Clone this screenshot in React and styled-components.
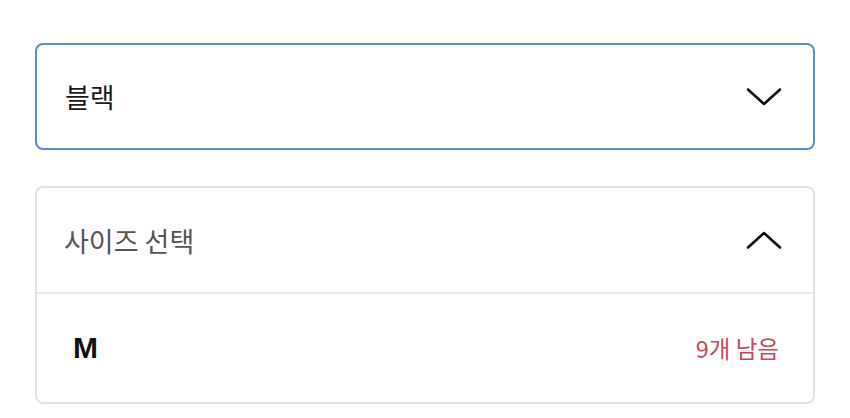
import React from "react";
import styled, { createGlobalStyle } from "styled-components";

const Global = createGlobalStyle`
  html, body { margin: 0; padding: 0; background: #fff; }
  body { font-family: "Noto Sans CJK KR", "Noto Sans", sans-serif; }
`;

const Page = styled.div`
  display: flex;
  flex-direction: column;
  gap: 36px;
  padding: 43px 35px 0;
`;

const Select = styled.div`
  box-sizing: border-box;
  height: 107px;
  border: 2px solid #5b8ccc;
  border-radius: 8px;
  display: flex;
  align-items: center;
  justify-content: space-between;
  padding: 0 31px 0 28px;
`;

const Value = styled.span`
  font-size: 27px;
  color: #1a1a1a;
`;

const Panel = styled.div`
  box-sizing: border-box;
  border: 2px solid #e2e2e2;
  border-radius: 8px;
  display: flex;
  flex-direction: column;
`;

const PanelHeader = styled.div`
  height: 104px;
  display: flex;
  align-items: center;
  justify-content: space-between;
  padding: 0 31px 0 27px;
  border-bottom: 2px solid #e6e6e6;
`;

const Placeholder = styled.span`
  font-size: 27px;
  color: #555;
`;

const OptionRow = styled.div`
  height: 108px;
  display: flex;
  align-items: center;
  justify-content: space-between;
  padding: 0 34px 0 36px;
`;

const SizeLabel = styled.span`
  font-family: "Liberation Sans", Arial, sans-serif;
  font-weight: 700;
  font-size: 30px;
  color: #111;
`;

const Stock = styled.span`
  font-size: 23.5px;
  color: #c84a5e;
`;

const Chevron = ({ up }) => (
  <svg width="36" height="18" viewBox="0 0 36 18" fill="none">
    <path
      d={up ? "M2 16.5 L18 2 L34 16.5" : "M2 1.5 L18 16 L34 1.5"}
      stroke="#111"
      strokeWidth="2.6"
      strokeLinecap="round"
      strokeLinejoin="round"
    />
  </svg>
);

export default function App() {
  return (
    <>
      <Global />
      <Page>
        <Select>
          <Value>블랙</Value>
          <Chevron />
        </Select>
        <Panel>
          <PanelHeader>
            <Placeholder>사이즈 선택</Placeholder>
            <Chevron up />
          </PanelHeader>
          <OptionRow>
            <SizeLabel>M</SizeLabel>
            <Stock>9개 남음</Stock>
          </OptionRow>
        </Panel>
      </Page>
    </>
  );
}
